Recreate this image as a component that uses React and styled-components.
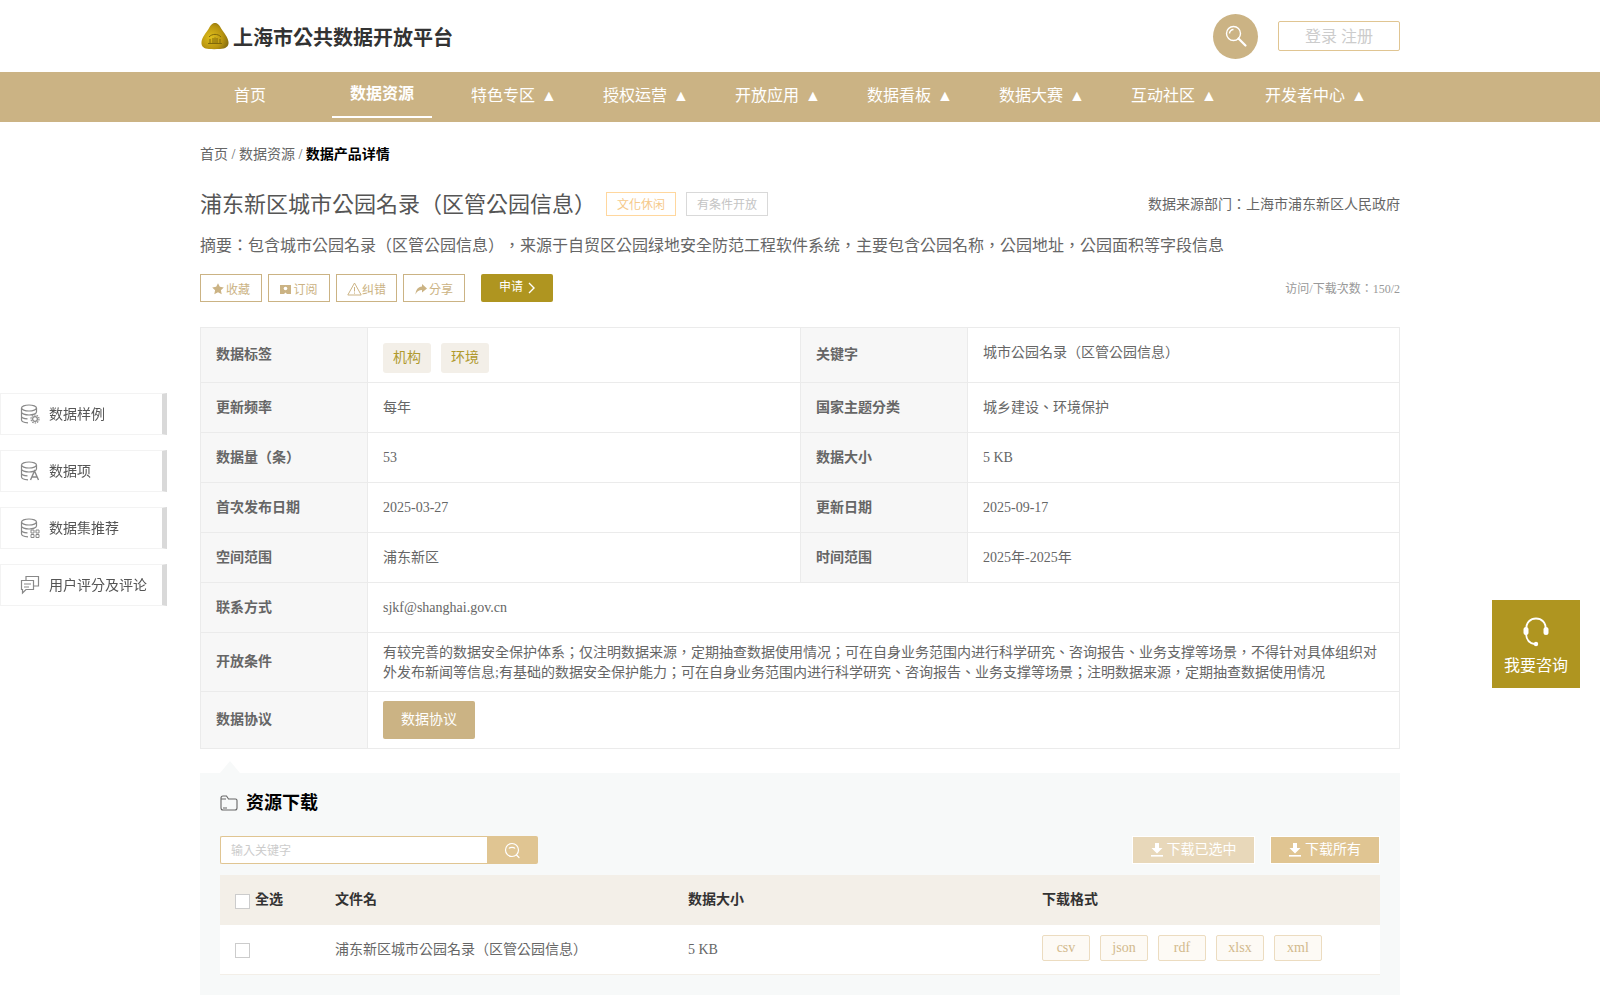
import React from "react";
import styled, { createGlobalStyle } from "styled-components";

const Global = createGlobalStyle`
  html, body { margin: 0; padding: 0; background: #fff; }
  body {
    font-family: "Liberation Serif", "Noto Sans CJK TC", serif;
    color: #666;
    font-size: 14px;
    text-spacing-trim: space-all;
  }
  * { box-sizing: border-box; }
`;

const GOLD = "#cbb384";
const OLIVE = "#af9520";
const SAND = "#e0c592";

const Header = styled.header`
  height: 72px;
  background: #fff;
`;
const Wrap = styled.div`
  width: 1200px;
  margin: 0 auto;
`;
const HeaderInner = styled(Wrap)`
  height: 72px;
  display: flex;
  align-items: center;
  justify-content: space-between;
`;
const Brand = styled.div`
  display: flex;
  align-items: center;
  gap: 3px;
`;
const BrandName = styled.span`
  padding-top: 3px;
  font-size: 20px;
  line-height: 28px;
  font-weight: 700;
  color: #333;
`;
const HeaderRight = styled.div`
  display: flex;
  align-items: center;
  gap: 20px;
`;
const SearchCircle = styled.div`
  width: 45px;
  height: 45px;
  border-radius: 50%;
  background: ${GOLD};
  display: flex;
  align-items: center;
  justify-content: center;
`;
const LoginBox = styled.div`
  width: 122px;
  height: 30px;
  border: 1px solid ${SAND};
  border-radius: 2px;
  font-size: 16px;
  line-height: 29px;
  text-align: center;
  color: #ccc;
`;
const NavBar = styled.nav`
  height: 50px;
  background: ${GOLD};
`;
const NavList = styled(Wrap)`
  display: flex;
  gap: 32px;
`;
const NavItem = styled.div`
  min-width: ${(p) => p.$min}px;
  padding: 0 6px;
  height: 46px;
  line-height: ${(p) => (p.$active ? 44 : 48)}px;
  text-align: center;
  font-size: 16px;
  word-spacing: 2px;
  color: #fff;
  white-space: nowrap;
  font-weight: ${(p) => (p.$active ? 700 : 400)};
  border-bottom: ${(p) => (p.$active ? "2px solid #fff" : "none")};
`;
const Crumbs = styled.div`
  margin-top: 21px;
  height: 20px;
  line-height: 24px;
  font-size: 14px;
  color: #666;
  b { color: #000; }
`;
const TitleRow = styled.div`
  margin-top: 29px;
  height: 24px;
  display: flex;
  align-items: center;
`;
const Title = styled.h1`
  margin: 0 10px 0 0;
  padding-top: 2px;
  font-size: 22px;
  line-height: 26px;
  font-weight: 400;
  color: #555;
`;
const Badge = styled.span`
  height: 24px;
  line-height: 24px;
  padding: 0 10px;
  margin-right: 10px;
  font-size: 12px;
  border: 1px solid ${(p) => p.$line};
  color: ${(p) => p.$text};
`;
const Source = styled.div`
  margin-left: auto;
  padding-top: 2px;
  font-size: 14px;
  line-height: 22px;
  color: #666;
`;
const Summary = styled.p`
  margin: 18px 0 -1px;
  font-size: 16px;
  line-height: 24px;
  color: #666;
`;
const Actions = styled.div`
  margin-top: 17px;
  height: 28px;
  display: flex;
  align-items: center;
  gap: 6px;
`;
const ActionBtn = styled.div`
  width: ${(p) => p.$w}px;
  height: 28px;
  padding-top: 2px;
  border: 1px solid ${GOLD};
  color: ${GOLD};
  font-size: 12px;
  display: flex;
  align-items: center;
  justify-content: center;
  gap: ${(p) => p.$gap ?? 2}px;
`;
const ApplyBtn = styled.div`
  margin-left: 10px;
  width: 72px;
  height: 28px;
  background: ${OLIVE};
  border-radius: 2px;
  color: #fff;
  font-size: 12px;
  display: flex;
  align-items: center;
  justify-content: center;
  gap: 5px;
  span { position: relative; top: -1px; line-height: 16px; }
`;
const Visits = styled.div`
  margin-left: auto;
  padding-top: 2px;
  font-size: 12px;
  line-height: 18px;
  color: #999;
`;
const InfoTable = styled.div`
  margin-top: 25px;
  border: 1px solid #ebebeb;
  border-bottom: none;
`;
const InfoRow = styled.div`
  display: grid;
  grid-template-columns: ${(p) => (p.$wide ? "167px 1fr" : "167px 433px 167px 1fr")};
  height: ${(p) => p.$h}px;
  border-bottom: 1px solid #ebebeb;
`;
const Label = styled.div`
  background: #f7f7f7;
  border-right: 1px solid #ebebeb;
  padding-left: 15px;
  display: flex;
  align-items: center;
  font-size: 14px;
  line-height: 20px;
  font-weight: 700;
  color: #666;
`;
const Value = styled.div`
  padding: 0 15px;
  display: flex;
  align-items: center;
  gap: 10px;
  font-size: 14px;
  line-height: 22px;
  color: #666;
  border-right: ${(p) => (p.$mid ? "1px solid #ebebeb" : "none")};
`;
const LongValue = styled(Value)`
  line-height: 20px;
  padding-top: 1px;
`;
const Raised = styled.span`
  position: relative;
  top: -2px;
`;
const DataTag = styled.span`
  height: 30px;
  line-height: 30px;
  padding: 0 10px;
  margin-top: 6px;
  border-radius: 3px;
  background: #f3efe8;
  color: #b09a2e;
  font-size: 14px;
`;
const AgreeBtn = styled.div`
  width: 92px;
  height: 38px;
  line-height: 38px;
  text-align: center;
  background: ${GOLD};
  color: #fff;
  font-size: 14px;
  border-radius: 2px;
`;
const Download = styled.section`
  position: relative;
  margin-top: 24px;
  padding: 20px 20px 20px;
  background: #f7f9f9;
  &::before {
    content: "";
    position: absolute;
    left: 20px;
    top: -12px;
    border-left: 10px solid transparent;
    border-right: 10px solid transparent;
    border-bottom: 12px solid #f7f9f9;
  }
`;
const SectionHead = styled.h2`
  margin: 0;
  height: 20px;
  display: flex;
  align-items: center;
  gap: 8px;
  font-size: 18px;
  line-height: 20px;
  color: #000;
`;
const Toolbar = styled.div`
  margin-top: 23px;
  height: 28px;
  display: flex;
  align-items: center;
`;
const SearchBox = styled.div`
  width: 267px;
  height: 28px;
  background: #fff;
  border: 1px solid ${SAND};
  border-right: none;
  border-radius: 2px 0 0 2px;
  padding-left: 10px;
  font-size: 12px;
  line-height: 28px;
  color: #ccc;
`;
const SearchBtn = styled.div`
  width: 51px;
  height: 28px;
  background: ${SAND};
  border-radius: 0 2px 2px 0;
  display: flex;
  align-items: center;
  justify-content: center;
`;
const DownloadBtns = styled.div`
  margin-left: auto;
  display: flex;
  gap: 15px;
`;
const DownloadBtn = styled.div`
  width: ${(p) => p.$w}px;
  height: 28px;
  line-height: 24px;
  background: ${(p) => p.$bg};
  border: 1px solid #fff;
  color: #fff;
  font-size: 14px;
  display: flex;
  align-items: center;
  justify-content: center;
  gap: 4px;
`;
const FileHead = styled.div`
  margin-top: 11px;
  height: 50px;
  line-height: 20px;
  background: #f3efe8;
  display: grid;
  grid-template-columns: 115px 353px 354px 1fr;
  align-items: center;
  font-size: 14px;
  font-weight: 700;
  color: #333;
`;
const FileRow = styled(FileHead)`
  margin-top: 0;
  background: #fff;
  border-bottom: 1px solid #f3efe8;
  font-weight: 400;
  color: #666;
`;
const CheckCell = styled.div`
  padding-left: 15px;
  display: flex;
  align-items: center;
  gap: 5px;
`;
const Check = styled.span`
  width: 15px;
  height: 15px;
  background: #fff;
  border: 1px solid #ccc;
  position: relative;
  top: 1px;
`;
const Formats = styled.div`
  display: flex;
  gap: 10px;
  position: relative;
  top: -2px;
`;
const FormatChip = styled.span`
  width: 48px;
  height: 26px;
  line-height: 24px;
  text-align: center;
  background: #fdfaf5;
  border: 1px solid #ecdcc0;
  border-radius: 2px;
  color: #d2b98c;
  font-size: 14px;
`;
const SideNav = styled.aside`
  position: fixed;
  left: 0;
  top: 393px;
  width: 167px;
  display: flex;
  flex-direction: column;
  gap: 15px;
`;
const SideItem = styled.div`
  height: 42px;
  background: #fff;
  border: 1px solid #f3f3f3;
  border-right: 5px solid #d9d9d9;
  padding-left: 19px;
  display: flex;
  align-items: center;
  gap: 9px;
  font-size: 14px;
  color: #555;
`;
const SideLabel = styled.span`
  padding-top: 2px;
  line-height: 20px;
`;
const Consult = styled.div`
  position: fixed;
  left: 1492px;
  top: 600px;
  width: 88px;
  height: 88px;
  background: ${OLIVE};
  color: #fff;
  font-size: 16px;
  line-height: 22px;
  display: flex;
  flex-direction: column;
  align-items: center;
  padding-top: 17px;
  gap: 8px;
`;

const Logo = () => (
  <svg width="30" height="28" viewBox="0 0 30 28">
    <defs>
      <radialGradient id="lg" cx="0.35" cy="0.55" r="0.8">
        <stop offset="0" stopColor="#e0bf1c" />
        <stop offset="0.55" stopColor="#b8940f" />
        <stop offset="1" stopColor="#6d5a12" />
      </radialGradient>
    </defs>
    <path d="M15 1C18 1 19.5 3.5 21.5 7C24 11 28 15 28.5 20C29 24.5 25.5 26.8 20 27C16 27.2 12 27.2 9 27C4 26.8 1 24.5 1.5 20C2 15 6 11 8.5 7C10.5 3.5 12 1 15 1Z" fill="url(#lg)" />
    <path d="M8 21.5H22M10 21.5V17M13 21.5V16M15 21.5V15.5M17 21.5V16M20 21.5V17M9 15C12 11.5 18 11.5 21 15" stroke="#80690a" strokeWidth="1" fill="none" />
  </svg>
);
const Magnifier = ({ size = 24, color = "#fff" }) => (
  <svg width={size} height={size} viewBox="0 0 24 24" fill="none" stroke={color} strokeWidth="1.4">
    <circle cx="9.5" cy="9.5" r="7" />
    <path d="M14.5 14.5L21.5 21.5" strokeWidth="2.2" strokeLinecap="round" />
    <path d="M5.5 9.5A4 4 0 0 1 9.5 5.5" />
  </svg>
);
const RoundSearch = () => (
  <svg width="17" height="17" viewBox="0 0 17 17" fill="none" stroke="#fff" strokeWidth="1.2">
    <circle cx="8" cy="8" r="6.5" />
    <path d="M12.5 13L15 15.5" strokeLinecap="round" />
    <path d="M5 6.5C6 5 10 5 11 6.5" />
  </svg>
);
const Star = () => (
  <svg width="12" height="12" viewBox="0 0 12 12" fill={GOLD}>
    <path d="M6 .2L7.8 3.8l4 .6-2.9 2.8.8 4L6 9.3 2.3 11.2l.8-4L.2 4.4l4-.6Z" />
  </svg>
);
const Mark = () => (
  <svg width="11" height="11" viewBox="0 0 11 11">
    <path d="M0 1H11V10H7L5.5 8.5 4 10H0Z" fill={GOLD} />
    <circle cx="5.5" cy="4.5" r="1.8" fill="#fff" />
  </svg>
);
const Warn = () => (
  <svg width="15" height="14" viewBox="0 0 15 14" fill="none" stroke={GOLD}>
    <path d="M7.5 1L14.2 13H.8Z" />
    <path d="M7.5 5V9.5M7.5 10.5V11.7" />
  </svg>
);
const Share = () => (
  <svg width="12" height="11" viewBox="0 0 12 11" fill={GOLD}>
    <path d="M7 0L12 4.5 7 8.5V6C4 6 2 7 .5 10.5 .8 6 3 2.8 7 2.6Z" />
  </svg>
);
const Chevron = () => (
  <svg width="7" height="12" viewBox="0 0 7 12" fill="none" stroke="#fff" strokeWidth="1.4">
    <path d="M1 1L6 6 1 11" />
  </svg>
);
const Folder = () => (
  <svg width="18" height="16" viewBox="0 0 18 16" fill="none" stroke="#666" strokeWidth="1.1">
    <path d="M1 13V3C1 1.8 1.8 1 3 1H6.5L8.5 4H15.5C16.5 4 17 4.7 17 5.5V13C17 14.2 16.2 15 15 15H3C1.8 15 1 14.2 1 13Z" />
    <path d="M1 4H6M3 13H7" />
  </svg>
);
const DownIcon = () => (
  <svg width="12" height="14" viewBox="0 0 12 14" fill="#fff">
    <path d="M4 0H8V5H11.5L6 10.5 .5 5H4Z" />
    <rect x="0" y="12" width="12" height="1.6" />
  </svg>
);
const DbBase = ({ children }) => (
  <svg width="20" height="20" viewBox="0 0 20 20" fill="none" stroke="#888" strokeWidth="1.2">
    <ellipse cx="9" cy="4" rx="7.5" ry="3" />
    <path d="M1.5 4V16C1.5 17.5 4 18.6 8 18.8M1.5 8C1.5 9.7 5 11 9 11s7.5-1.3 7.5-3V4M1.5 12.2C1.5 13.6 4 14.6 7.5 14.9" />
    {children}
  </svg>
);
const Headset = () => (
  <svg width="26" height="30" viewBox="0 0 26 30" fill="none">
    <path d="M3.5 13C2.5 5 8 1.5 13 1.5S23.5 5 22.5 13" stroke="#fff" strokeWidth="1.8" />
    <rect x="0.5" y="10" width="5" height="8" rx="2.5" fill="#fff" />
    <rect x="20.5" y="10" width="5" height="8" rx="2.5" fill="#fff" />
    <path d="M3 17C3.5 23 7 26.5 11.5 27" stroke="#fff" strokeWidth="1.8" />
    <circle cx="13" cy="27" r="2.2" fill="#fff" />
  </svg>
);

const nav = ["首页", "数据资源", "特色专区 ▲", "授权运营 ▲", "开放应用 ▲", "数据看板 ▲", "数据大赛 ▲", "互动社区 ▲", "开发者中心 ▲"];

const sideItems = [
  { text: "数据样例", icon: <DbBase><circle cx="15" cy="15" r="2.4" /><circle cx="15" cy="15" r="4" strokeDasharray="1.5 1" /></DbBase> },
  { text: "数据项", icon: <DbBase><path d="M10.5 19L14.5 10 18.5 19M12 16H17" strokeWidth="1.4" /></DbBase> },
  { text: "数据集推荐", icon: <DbBase><path d="M11 12h3v3h-3zM16 12h3v3h-3zM11 16.5h3v3h-3zM16 16.5h3v3h-3z" strokeWidth="1" /></DbBase> },
  {
    text: "用户评分及评论",
    icon: (
      <svg width="20" height="20" viewBox="0 0 20 20" fill="none" stroke="#888" strokeWidth="1.2">
        <path d="M1.5 5.5H13.5V14.5H6L2.5 18V14.5H1.5Z" />
        <path d="M6 5.5V1.5H18.5V11H13.5M4 9H11M4 12H9" />
      </svg>
    ),
  },
];

const formats = ["csv", "json", "rdf", "xlsx", "xml"];

export default function App() {
  return (
    <>
      <Global />
      <Header>
        <HeaderInner>
          <Brand>
            <Logo />
            <BrandName>上海市公共数据开放平台</BrandName>
          </Brand>
          <HeaderRight>
            <SearchCircle>
              <Magnifier />
            </SearchCircle>
            <LoginBox>登录 注册</LoginBox>
          </HeaderRight>
        </HeaderInner>
      </Header>
      <NavBar>
        <NavList>
          {nav.map((n, i) => (
            <NavItem key={n} $active={i === 1} $min={i === nav.length - 1 ? 120 : 100}>{n}</NavItem>
          ))}
        </NavList>
      </NavBar>
      <Wrap>
        <Crumbs>首页 / 数据资源 / <b>数据产品详情</b></Crumbs>
        <TitleRow>
          <Title>浦东新区城市公园名录（区管公园信息）</Title>
          <Badge $line="#ffd79e" $text="#f6c98a">文化休闲</Badge>
          <Badge $line="#d9d9d9" $text="#c4c4c4">有条件开放</Badge>
          <Source>数据来源部门：上海市浦东新区人民政府</Source>
        </TitleRow>
        <Summary>摘要：包含城市公园名录（区管公园信息），来源于自贸区公园绿地安全防范工程软件系统，主要包含公园名称，公园地址，公园面积等字段信息</Summary>
        <Actions>
          <ActionBtn $w={62}><Star />收藏</ActionBtn>
          <ActionBtn $w={62}><Mark />订阅</ActionBtn>
          <ActionBtn $w={61} $gap={0}><Warn />纠错</ActionBtn>
          <ActionBtn $w={62}><Share />分享</ActionBtn>
          <ApplyBtn><span>申请</span><Chevron /></ApplyBtn>
          <Visits>访问/下载次数：150/2</Visits>
        </Actions>
        <InfoTable>
          <InfoRow $h={55}>
            <Label>数据标签</Label>
            <Value $mid><DataTag>机构</DataTag><DataTag>环境</DataTag></Value>
            <Label>关键字</Label>
            <Value><Raised>城市公园名录（区管公园信息）</Raised></Value>
          </InfoRow>
          <InfoRow $h={50}>
            <Label>更新频率</Label>
            <Value $mid>每年</Value>
            <Label>国家主题分类</Label>
            <Value>城乡建设、环境保护</Value>
          </InfoRow>
          <InfoRow $h={50}>
            <Label>数据量（条）</Label>
            <Value $mid>53</Value>
            <Label>数据大小</Label>
            <Value>5 KB</Value>
          </InfoRow>
          <InfoRow $h={50}>
            <Label>首次发布日期</Label>
            <Value $mid>2025-03-27</Value>
            <Label>更新日期</Label>
            <Value>2025-09-17</Value>
          </InfoRow>
          <InfoRow $h={50}>
            <Label>空间范围</Label>
            <Value $mid>浦东新区</Value>
            <Label>时间范围</Label>
            <Value>2025年-2025年</Value>
          </InfoRow>
          <InfoRow $h={50} $wide>
            <Label>联系方式</Label>
            <Value>sjkf@shanghai.gov.cn</Value>
          </InfoRow>
          <InfoRow $h={59} $wide>
            <Label>开放条件</Label>
            <LongValue>有较完善的数据安全保护体系；仅注明数据来源，定期抽查数据使用情况；可在自身业务范围内进行科学研究、咨询报告、业务支撑等场景，不得针对具体组织对外发布新闻等信息;有基础的数据安全保护能力；可在自身业务范围内进行科学研究、咨询报告、业务支撑等场景；注明数据来源，定期抽查数据使用情况</LongValue>
          </InfoRow>
          <InfoRow $h={57} $wide>
            <Label>数据协议</Label>
            <Value><AgreeBtn>数据协议</AgreeBtn></Value>
          </InfoRow>
        </InfoTable>
        <Download>
          <SectionHead><Folder />资源下载</SectionHead>
          <Toolbar>
            <SearchBox>输入关键字</SearchBox>
            <SearchBtn><RoundSearch /></SearchBtn>
            <DownloadBtns>
              <DownloadBtn $w={123} $bg="#e8d8ba"><DownIcon />下载已选中</DownloadBtn>
              <DownloadBtn $w={110} $bg={SAND}><DownIcon />下载所有</DownloadBtn>
            </DownloadBtns>
          </Toolbar>
          <FileHead>
            <CheckCell><Check />全选</CheckCell>
            <div>文件名</div>
            <div>数据大小</div>
            <div>下载格式</div>
          </FileHead>
          <FileRow>
            <CheckCell><Check /></CheckCell>
            <div>浦东新区城市公园名录（区管公园信息）</div>
            <div>5 KB</div>
            <Formats>
              {formats.map((f) => (
                <FormatChip key={f}>{f}</FormatChip>
              ))}
            </Formats>
          </FileRow>
        </Download>
      </Wrap>
      <SideNav>
        {sideItems.map((s) => (
          <SideItem key={s.text}>{s.icon}<SideLabel>{s.text}</SideLabel></SideItem>
        ))}
      </SideNav>
      <Consult>
        <Headset />
        我要咨询
      </Consult>
    </>
  );
}
